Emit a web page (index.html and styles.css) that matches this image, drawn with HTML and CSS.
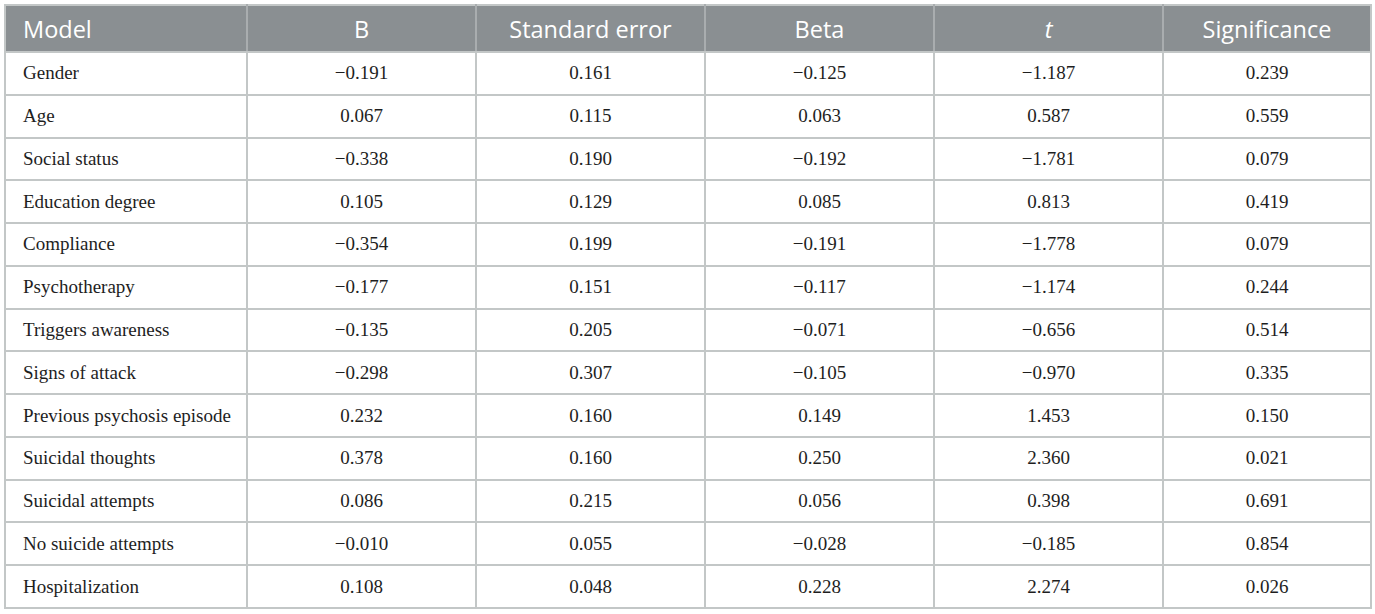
FILE: index.html
```html
<!DOCTYPE html>
<html>
<head>
<meta charset="utf-8">
<link rel="stylesheet" href="styles.css">
</head>
<body>
<div class="wrap">
<table class="data">
<colgroup>
<col class="c-model"><col class="c-num"><col class="c-num"><col class="c-num"><col class="c-num"><col class="c-sig">
</colgroup>
<thead>
<tr><th class="left">Model</th><th>B</th><th>Standard error</th><th>Beta</th><th><i>t</i></th><th>Significance</th></tr>
</thead>
<tbody>
<tr><td class="left">Gender</td><td>−0.191</td><td>0.161</td><td>−0.125</td><td>−1.187</td><td>0.239</td></tr>
<tr><td class="left">Age</td><td>0.067</td><td>0.115</td><td>0.063</td><td>0.587</td><td>0.559</td></tr>
<tr><td class="left">Social status</td><td>−0.338</td><td>0.190</td><td>−0.192</td><td>−1.781</td><td>0.079</td></tr>
<tr><td class="left">Education degree</td><td>0.105</td><td>0.129</td><td>0.085</td><td>0.813</td><td>0.419</td></tr>
<tr><td class="left">Compliance</td><td>−0.354</td><td>0.199</td><td>−0.191</td><td>−1.778</td><td>0.079</td></tr>
<tr><td class="left">Psychotherapy</td><td>−0.177</td><td>0.151</td><td>−0.117</td><td>−1.174</td><td>0.244</td></tr>
<tr><td class="left">Triggers awareness</td><td>−0.135</td><td>0.205</td><td>−0.071</td><td>−0.656</td><td>0.514</td></tr>
<tr><td class="left">Signs of attack</td><td>−0.298</td><td>0.307</td><td>−0.105</td><td>−0.970</td><td>0.335</td></tr>
<tr><td class="left">Previous psychosis episode</td><td>0.232</td><td>0.160</td><td>0.149</td><td>1.453</td><td>0.150</td></tr>
<tr><td class="left">Suicidal thoughts</td><td>0.378</td><td>0.160</td><td>0.250</td><td>2.360</td><td>0.021</td></tr>
<tr><td class="left">Suicidal attempts</td><td>0.086</td><td>0.215</td><td>0.056</td><td>0.398</td><td>0.691</td></tr>
<tr><td class="left">No suicide attempts</td><td>−0.010</td><td>0.055</td><td>−0.028</td><td>−0.185</td><td>0.854</td></tr>
<tr><td class="left">Hospitalization</td><td>0.108</td><td>0.048</td><td>0.228</td><td>2.274</td><td>0.026</td></tr>
</tbody>
</table>
</div>
</body>
</html>
```

FILE: styles.css
```css
html, body {
  margin: 0;
  padding: 0;
  background: #ffffff;
}
.wrap {
  padding: 4px 5px 0 4px;
}
.data {
  width: 1366px;
  border-collapse: collapse;
  table-layout: fixed;
}
.c-model { width: 242px; }
.c-num { width: 229px; }
.c-sig { width: 208px; }
.data th {
  background: #8a8f92;
  color: #ffffff;
  font-family: "Open Sans", "Noto Sans", sans-serif;
  font-weight: 400;
  font-size: 23.5px;
  height: 47px;
  padding: 0 8px;
  text-align: center;
  border: 2px solid #c3c7c7;
  border-left-color: #a9adaf;
  border-right-color: #a9adaf;
  box-sizing: border-box;
}
.data th:first-child { border-left-color: #c3c7c7; }
.data th:last-child { border-right-color: #c3c7c7; }
.data th i { font-style: italic; }
.data td {
  font-family: "Liberation Serif", "Times New Roman", serif;
  font-size: 19px;
  color: #1e1e1e;
  height: 42.77px;
  padding: 0 8px;
  text-align: center;
  border: 2px solid #c3c7c7;
  box-sizing: border-box;
}
.data .left {
  text-align: left;
  padding-left: 17px;
}
```
